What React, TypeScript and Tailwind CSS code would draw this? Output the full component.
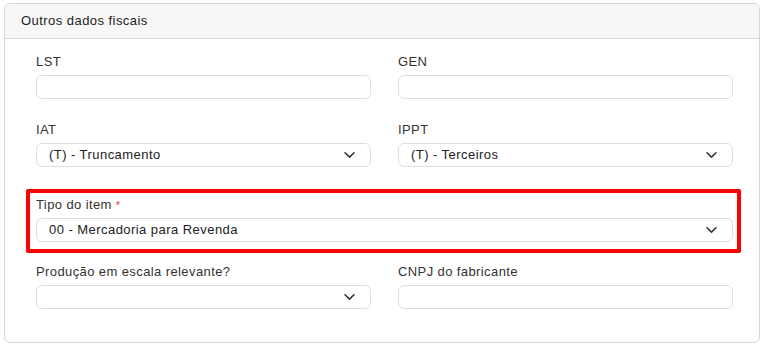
import React from "react";

const font = { fontFamily: '"Liberation Sans", Arial, sans-serif' };

function Chevron() {
  return (
    <svg width="11" height="7" viewBox="0 0 11 7" className="absolute right-[15px] top-1/2 -translate-y-1/2">
      <path d="M1 1.2 L5.5 5.6 L10 1.2" fill="none" stroke="#333" strokeWidth="1.5" strokeLinecap="round" strokeLinejoin="round" />
    </svg>
  );
}

function Label({ children, required }: { children: React.ReactNode; required?: boolean }) {
  return (
    <div className="text-[13px] leading-[18px] tracking-[0.4px] text-[#333] mb-[4px] h-[18px]">
      {children}
      {required && <span className="text-[#e53935] ml-[4px] text-[11px] align-top">*</span>}
    </div>
  );
}

function Input() {
  return <div className="h-[24px] rounded-[6px] border border-[#dedede] bg-white" />;
}

function Select({ value }: { value?: string }) {
  return (
    <div className="relative h-[24px] rounded-[6px] border border-[#dedede] bg-white flex items-center pl-[12px] text-[13px] tracking-[0.45px] text-[#222]">
      {value}
      <Chevron />
    </div>
  );
}

export default function App() {
  return (
    <div className="w-[764px] h-[347px] bg-white pt-[3px] pl-[4px] pr-[4px]" style={font}>
      <div className="h-[340px] border border-[#d6d6d6] rounded-[6px] overflow-hidden">
        <div className="h-[35px] bg-[#f7f7f7] border-b border-[#d6d6d6] px-[16px] flex items-center text-[13px] tracking-[0.45px] text-[#222]">
          Outros dados fiscais
        </div>
        <div className="pl-[31px] pr-[26px] pt-[14px]">
          <div className="grid grid-cols-2 gap-x-[27px]">
            <div>
              <Label>LST</Label>
              <Input />
            </div>
            <div>
              <Label>GEN</Label>
              <Input />
            </div>
          </div>
          <div className="grid grid-cols-2 gap-x-[27px] mt-[22px]">
            <div>
              <Label>IAT</Label>
              <Select value="(T) - Truncamento" />
            </div>
            <div>
              <Label>IPPT</Label>
              <Select value="(T) - Terceiros" />
            </div>
          </div>
          <div className="mt-[22px] -ml-[10px] -mr-[8px] border-[4px] border-[#ff0000] rounded-[2px] pl-[6px] pr-[4px] pt-[3px] pb-[7px]">
            <Label required>Tipo do item</Label>
            <Select value="00 - Mercadoria para Revenda" />
          </div>
          <div className="grid grid-cols-2 gap-x-[27px] mt-[10px]">
            <div>
              <Label>Produção em escala relevante?</Label>
              <Select />
            </div>
            <div>
              <Label>CNPJ do fabricante</Label>
              <Input />
            </div>
          </div>
        </div>
      </div>
    </div>
  );
}
